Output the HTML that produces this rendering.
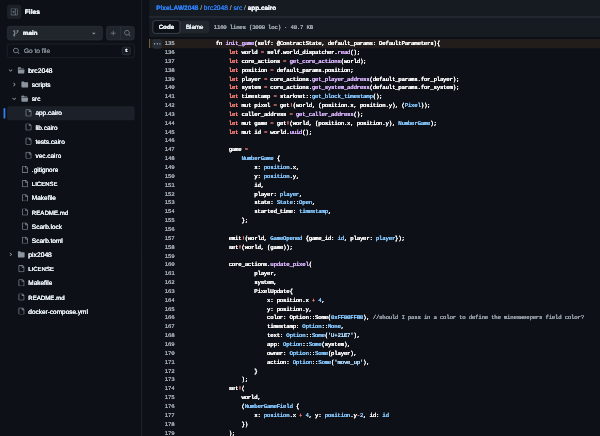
<!DOCTYPE html>
<html lang="en">
<head>
<meta charset="utf-8">
<title>brc2048/src/app.cairo at main · PixeLAW2048</title>
<style>
html,body{margin:0;padding:0;background:#0d1117;}
body{width:600px;height:436px;overflow:hidden;position:relative;will-change:transform;}
#root{position:absolute;left:0;top:0;width:1356px;height:986px;transform:scale(0.4425) rotate(0.0002deg);transform-origin:0 0;color:#e6edf3;font-family:"Liberation Sans",sans-serif;font-size:14px;line-height:20px;text-shadow:0 0 0 currentColor,0 0 0 currentColor;text-rendering:geometricPrecision;}
svg{display:block;fill:currentColor;}
#side{position:absolute;left:0;top:0;width:319px;height:986px;border-right:1px solid #30363d;background:#0d1117;}
.sh{position:absolute;left:16px;top:11px;height:32px;display:flex;align-items:center;}
.tb{width:32px;height:32px;border-radius:6px;background:#1c2128;color:#8b949e;display:flex;align-items:center;justify-content:center;}
.sh h2{margin:0 0 0 8px;font-size:15px;font-weight:700;color:#e6edf3;}
.br{position:absolute;left:16px;top:59px;width:288px;height:32px;display:flex;}
.bb{box-sizing:border-box;width:216px;height:32px;border:1px solid #363c44;border-radius:6px;background:#21262d;display:flex;align-items:center;padding:0 11px 0 11px;color:#8b949e;}
.bt{color:#e6edf3;font-weight:700;font-size:14px;margin-left:8px;flex:1;}
.grp{margin-left:8px;display:flex;}
.g1,.g2{box-sizing:border-box;width:32.5px;height:32px;border:1px solid #363c44;background:#21262d;color:#7d8590;display:flex;align-items:center;justify-content:center;}
.g1{border-radius:6px 0 0 6px;}
.g2{border-radius:0 6px 6px 0;margin-left:-1px;}
.sr{position:absolute;left:16px;top:99px;width:288px;height:32px;box-sizing:border-box;border:1px solid #30363d;border-radius:6px;background:#0d1117;display:flex;align-items:center;padding:0 8px 0 12px;color:#8b949e;}
.sp{margin-left:9px;flex:1;color:#7d8590;font-size:14.8px;}
kbd{font-family:"Liberation Mono",monospace;font-size:11px;line-height:10px;color:#e6edf3;border:1px solid #484f58;border-radius:4px;padding:3px 5px;background:#161b22;font-weight:700;}
.tree{position:absolute;left:16px;top:144px;width:288px;margin:0;padding:0;list-style:none;}
.ti{position:relative;height:32px;display:flex;align-items:center;border-radius:6px;box-sizing:border-box;color:#e6edf3;}
.ti .tg{width:16px;height:32px;display:flex;align-items:center;justify-content:center;color:#a3abb4;flex:none;position:relative;top:-1px;}
.ti .ic{width:16px;margin-left:8px;color:#8b949e;flex:none;position:relative;top:-1px;}
.ti .nm{margin-left:8px;font-size:14.6px;position:relative;top:1px;}
.ti.act{background:#1c2129;}
.ti.act .nm{font-weight:400;}
.ti.act::before{content:"";position:absolute;left:-8px;top:4px;width:4px;height:24px;border-radius:6px;background:#2f81f7;}
#main{position:absolute;left:337px;top:0;width:1030px;height:986px;}
.crumb{position:absolute;left:0;top:0;right:0;height:39px;background:#161b22;font-size:15.1px;line-height:24px;padding:6px 0 0 16px;box-sizing:border-box;}
.crumb a{color:#2b79e8;}
.crumb .b{font-weight:700;font-size:14.7px;}
.crumb .sep{color:#7d8590;margin:0 4px;}
.crumb .cur{font-weight:700;font-size:14.5px;color:#e6edf3;}
.hr{position:absolute;left:0;right:0;top:38px;height:1px;background:#484f58;z-index:3;}
.hr2{position:absolute;left:0;right:0;top:84px;height:1px;background:#06090d;z-index:3;}
.tool{position:absolute;left:0;top:39px;right:0;height:45px;background:#161b22;display:flex;align-items:center;}
.seg{margin-left:8px;margin-top:-1px;height:28px;border-radius:6px;background:#21262d;display:flex;font-size:14px;box-sizing:border-box;}
.seg .on{box-sizing:border-box;height:30px;margin-top:-1px;width:62px;border:1px solid #6e7681;border-radius:6px;background:#0d1117;font-weight:700;display:flex;align-items:center;justify-content:center;}
.seg .off{height:28px;width:66px;display:flex;align-items:center;justify-content:center;}
.meta{margin-left:10px;font-family:"Liberation Mono",monospace;font-size:13px;letter-spacing:-0.57px;color:#9da5ae;}
.meta,.code,kbd{text-shadow:0 0 0 currentColor,0 0 0 currentColor;}
.code{position:absolute;left:0;top:89px;right:0;font-family:"Liberation Mono",monospace;font-size:13px;letter-spacing:-0.57px;line-height:20px;}
.ln{position:relative;height:20px;white-space:pre;}
.ln .no{position:absolute;left:0;width:57px;text-align:right;color:#9da5ae;}
.ln .cd{position:absolute;left:93px;color:#ffffff;}
.ln.hl::before{content:"";position:absolute;left:0;right:0;top:-1px;height:21px;background:#221d1b;box-shadow:inset 2px 0 0 #806744;}
.kb{position:absolute;left:7px;top:-1px;width:22px;height:22px;border-radius:6px;background:#262c35;color:#f0f6fc;display:flex;align-items:center;justify-content:center;}
.kb svg{width:15px;height:15px;}
.k{color:#ff8278;}.f{color:#dab4ff;}.c{color:#86c8ff;}.s{color:#b0dcff;}.m{color:#99a2ac;}

</style>
</head>
<body>
<div id="root">
<aside id="side">
<div class="sh"><span class="tb"><svg width="16" height="16" viewBox="0 0 16 16"><path d="m4.177 7.823 2.396-2.396A.25.25 0 0 1 7 5.604v4.792a.25.25 0 0 1-.427.177L4.177 8.177a.25.25 0 0 1 0-.354Z"/><path d="M0 1.75C0 .784.784 0 1.75 0h12.5C15.216 0 16 .784 16 1.75v12.5A1.75 1.75 0 0 1 14.25 16H1.75A1.75 1.75 0 0 1 0 14.25Zm1.75-.25a.25.25 0 0 0-.25.25v12.5c0 .138.112.25.25.25H9.5v-13Zm12.5 13a.25.25 0 0 0 .25-.25V1.75a.25.25 0 0 0-.25-.25H11v13Z"/></svg></span><h2>Files</h2></div>
<div class="br"><span class="bb"><span class="bi"><svg width="16" height="16" viewBox="0 0 16 16"><path d="M9.5 3.25a2.25 2.25 0 1 1 3 2.122V6A2.5 2.5 0 0 1 10 8.5H6a1 1 0 0 0-1 1v1.128a2.251 2.251 0 1 1-1.5 0V5.372a2.25 2.25 0 1 1 1.5 0v1.836A2.493 2.493 0 0 1 6 7h4a1 1 0 0 0 1-1v-.628A2.25 2.25 0 0 1 9.5 3.25Zm-6 0a.75.75 0 1 0 1.5 0 .75.75 0 0 0-1.5 0Zm8.25-.75a.75.75 0 1 0 0 1.5.75.75 0 0 0 0-1.5ZM4.25 12a.75.75 0 1 0 0 1.5.75.75 0 0 0 0-1.5Z"/></svg></span><span class="bt">main</span><span class="bd"><svg width="16" height="16" viewBox="0 0 16 16"><path d="m4.427 7.427 3.396 3.396a.25.25 0 0 0 .354 0l3.396-3.396A.25.25 0 0 0 11.396 7H4.604a.25.25 0 0 0-.177.427Z"/></svg></span></span><span class="grp"><span class="g1"><svg width="16" height="16" viewBox="0 0 16 16"><path d="M7.75 2a.75.75 0 0 1 .75.75V7h4.25a.75.75 0 0 1 0 1.5H8.5v4.25a.75.75 0 0 1-1.5 0V8.5H2.75a.75.75 0 0 1 0-1.5H7V2.75A.75.75 0 0 1 7.75 2Z"/></svg></span><span class="g2"><svg width="16" height="16" viewBox="0 0 16 16"><path d="M10.68 11.74a6 6 0 0 1-7.922-8.982 6 6 0 0 1 8.982 7.922l3.04 3.04a.749.749 0 0 1-.326 1.275.749.749 0 0 1-.734-.215ZM11.5 7a4.499 4.499 0 1 0-8.997 0A4.499 4.499 0 0 0 11.5 7Z"/></svg></span></span></div>
<div class="sr"><span class="si"><svg width="16" height="16" viewBox="0 0 16 16"><path d="M10.68 11.74a6 6 0 0 1-7.922-8.982 6 6 0 0 1 8.982 7.922l3.04 3.04a.749.749 0 0 1-.326 1.275.749.749 0 0 1-.734-.215ZM11.5 7a4.499 4.499 0 1 0-8.997 0A4.499 4.499 0 0 0 11.5 7Z"/></svg></span><span class="sp">Go to file</span><kbd>t</kbd></div>
<ul class="tree">
<li class="ti" style="padding-left:0px"><span class="tg"><svg width="12" height="12" viewBox="0 0 12 12"><path d="M6 8.825c-.2 0-.4-.1-.5-.2l-3.3-3.3c-.3-.3-.3-.8 0-1.1.3-.3.8-.3 1.1 0l2.7 2.7 2.7-2.7c.3-.3.8-.3 1.1 0 .3.3.3.8 0 1.1l-3.2 3.2c-.2.2-.4.3-.6.3Z"/></svg></span><span class="ic"><svg width="16" height="16" viewBox="0 0 16 16"><path d="M.513 1.513A1.75 1.75 0 0 1 1.75 1h3.5c.55 0 1.07.26 1.4.7l.9 1.2a.25.25 0 0 0 .2.1H13a1 1 0 0 1 1 1v.5H2.75a.75.75 0 0 0 0 1.5h11.978a1 1 0 0 1 .994 1.117L15 13.25A1.75 1.75 0 0 1 13.25 15H1.75A1.75 1.75 0 0 1 0 13.25V2.75c0-.464.184-.91.513-1.237Z"/></svg></span><span class="nm" style="font-size:15.2px">brc2048</span></li>
<li class="ti" style="padding-left:8px"><span class="tg"><svg width="12" height="12" viewBox="0 0 12 12"><path d="M4.7 10c-.2 0-.4-.1-.5-.2-.3-.3-.3-.8 0-1.1L6.9 6 4.2 3.3c-.3-.3-.3-.8 0-1.1.3-.3.8-.3 1.1 0l3.3 3.2c.3.3.3.8 0 1.1L5.3 9.7c-.2.2-.4.3-.6.3Z"/></svg></span><span class="ic"><svg width="16" height="16" viewBox="0 0 16 16"><path d="M1.75 1A1.75 1.75 0 0 0 0 2.75v10.5C0 14.216.784 15 1.75 15h12.5A1.75 1.75 0 0 0 16 13.25v-8.5A1.75 1.75 0 0 0 14.25 3H7.5a.25.25 0 0 1-.2-.1l-.9-1.2C6.07 1.26 5.55 1 5 1H1.75Z"/></svg></span><span class="nm">scripts</span></li>
<li class="ti" style="padding-left:8px"><span class="tg"><svg width="12" height="12" viewBox="0 0 12 12"><path d="M6 8.825c-.2 0-.4-.1-.5-.2l-3.3-3.3c-.3-.3-.3-.8 0-1.1.3-.3.8-.3 1.1 0l2.7 2.7 2.7-2.7c.3-.3.8-.3 1.1 0 .3.3.3.8 0 1.1l-3.2 3.2c-.2.2-.4.3-.6.3Z"/></svg></span><span class="ic"><svg width="16" height="16" viewBox="0 0 16 16"><path d="M.513 1.513A1.75 1.75 0 0 1 1.75 1h3.5c.55 0 1.07.26 1.4.7l.9 1.2a.25.25 0 0 0 .2.1H13a1 1 0 0 1 1 1v.5H2.75a.75.75 0 0 0 0 1.5h11.978a1 1 0 0 1 .994 1.117L15 13.25A1.75 1.75 0 0 1 13.25 15H1.75A1.75 1.75 0 0 1 0 13.25V2.75c0-.464.184-.91.513-1.237Z"/></svg></span><span class="nm">src</span></li>
<li class="ti act" style="padding-left:16px"><span class="tg"></span><span class="ic"><svg width="16" height="16" viewBox="0 0 16 16"><path d="M2 1.75C2 .784 2.784 0 3.75 0h6.586c.464 0 .909.184 1.237.513l2.914 2.914c.329.328.513.773.513 1.237v9.586A1.75 1.75 0 0 1 13.25 16h-9.5A1.75 1.75 0 0 1 2 14.25Zm1.75-.25a.25.25 0 0 0-.25.25v12.5c0 .138.112.25.25.25h9.5a.25.25 0 0 0 .25-.25V6h-2.75A1.75 1.75 0 0 1 9 4.25V1.5Zm6.75.062V4.25c0 .138.112.25.25.25h2.688l-.011-.013-2.914-2.914-.013-.011Z"/></svg></span><span class="nm">app.cairo</span></li>
<li class="ti" style="padding-left:16px"><span class="tg"></span><span class="ic"><svg width="16" height="16" viewBox="0 0 16 16"><path d="M2 1.75C2 .784 2.784 0 3.75 0h6.586c.464 0 .909.184 1.237.513l2.914 2.914c.329.328.513.773.513 1.237v9.586A1.75 1.75 0 0 1 13.25 16h-9.5A1.75 1.75 0 0 1 2 14.25Zm1.75-.25a.25.25 0 0 0-.25.25v12.5c0 .138.112.25.25.25h9.5a.25.25 0 0 0 .25-.25V6h-2.75A1.75 1.75 0 0 1 9 4.25V1.5Zm6.75.062V4.25c0 .138.112.25.25.25h2.688l-.011-.013-2.914-2.914-.013-.011Z"/></svg></span><span class="nm">lib.cairo</span></li>
<li class="ti" style="padding-left:16px"><span class="tg"></span><span class="ic"><svg width="16" height="16" viewBox="0 0 16 16"><path d="M2 1.75C2 .784 2.784 0 3.75 0h6.586c.464 0 .909.184 1.237.513l2.914 2.914c.329.328.513.773.513 1.237v9.586A1.75 1.75 0 0 1 13.25 16h-9.5A1.75 1.75 0 0 1 2 14.25Zm1.75-.25a.25.25 0 0 0-.25.25v12.5c0 .138.112.25.25.25h9.5a.25.25 0 0 0 .25-.25V6h-2.75A1.75 1.75 0 0 1 9 4.25V1.5Zm6.75.062V4.25c0 .138.112.25.25.25h2.688l-.011-.013-2.914-2.914-.013-.011Z"/></svg></span><span class="nm">tests.cairo</span></li>
<li class="ti" style="padding-left:16px"><span class="tg"></span><span class="ic"><svg width="16" height="16" viewBox="0 0 16 16"><path d="M2 1.75C2 .784 2.784 0 3.75 0h6.586c.464 0 .909.184 1.237.513l2.914 2.914c.329.328.513.773.513 1.237v9.586A1.75 1.75 0 0 1 13.25 16h-9.5A1.75 1.75 0 0 1 2 14.25Zm1.75-.25a.25.25 0 0 0-.25.25v12.5c0 .138.112.25.25.25h9.5a.25.25 0 0 0 .25-.25V6h-2.75A1.75 1.75 0 0 1 9 4.25V1.5Zm6.75.062V4.25c0 .138.112.25.25.25h2.688l-.011-.013-2.914-2.914-.013-.011Z"/></svg></span><span class="nm">vec.cairo</span></li>
<li class="ti" style="padding-left:8px"><span class="tg"></span><span class="ic"><svg width="16" height="16" viewBox="0 0 16 16"><path d="M2 1.75C2 .784 2.784 0 3.75 0h6.586c.464 0 .909.184 1.237.513l2.914 2.914c.329.328.513.773.513 1.237v9.586A1.75 1.75 0 0 1 13.25 16h-9.5A1.75 1.75 0 0 1 2 14.25Zm1.75-.25a.25.25 0 0 0-.25.25v12.5c0 .138.112.25.25.25h9.5a.25.25 0 0 0 .25-.25V6h-2.75A1.75 1.75 0 0 1 9 4.25V1.5Zm6.75.062V4.25c0 .138.112.25.25.25h2.688l-.011-.013-2.914-2.914-.013-.011Z"/></svg></span><span class="nm">.gitignore</span></li>
<li class="ti" style="padding-left:8px"><span class="tg"></span><span class="ic"><svg width="16" height="16" viewBox="0 0 16 16"><path d="M2 1.75C2 .784 2.784 0 3.75 0h6.586c.464 0 .909.184 1.237.513l2.914 2.914c.329.328.513.773.513 1.237v9.586A1.75 1.75 0 0 1 13.25 16h-9.5A1.75 1.75 0 0 1 2 14.25Zm1.75-.25a.25.25 0 0 0-.25.25v12.5c0 .138.112.25.25.25h9.5a.25.25 0 0 0 .25-.25V6h-2.75A1.75 1.75 0 0 1 9 4.25V1.5Zm6.75.062V4.25c0 .138.112.25.25.25h2.688l-.011-.013-2.914-2.914-.013-.011Z"/></svg></span><span class="nm" style="font-size:13.5px">LICENSE</span></li>
<li class="ti" style="padding-left:8px"><span class="tg"></span><span class="ic"><svg width="16" height="16" viewBox="0 0 16 16"><path d="M2 1.75C2 .784 2.784 0 3.75 0h6.586c.464 0 .909.184 1.237.513l2.914 2.914c.329.328.513.773.513 1.237v9.586A1.75 1.75 0 0 1 13.25 16h-9.5A1.75 1.75 0 0 1 2 14.25Zm1.75-.25a.25.25 0 0 0-.25.25v12.5c0 .138.112.25.25.25h9.5a.25.25 0 0 0 .25-.25V6h-2.75A1.75 1.75 0 0 1 9 4.25V1.5Zm6.75.062V4.25c0 .138.112.25.25.25h2.688l-.011-.013-2.914-2.914-.013-.011Z"/></svg></span><span class="nm">Makefile</span></li>
<li class="ti" style="padding-left:8px"><span class="tg"></span><span class="ic"><svg width="16" height="16" viewBox="0 0 16 16"><path d="M2 1.75C2 .784 2.784 0 3.75 0h6.586c.464 0 .909.184 1.237.513l2.914 2.914c.329.328.513.773.513 1.237v9.586A1.75 1.75 0 0 1 13.25 16h-9.5A1.75 1.75 0 0 1 2 14.25Zm1.75-.25a.25.25 0 0 0-.25.25v12.5c0 .138.112.25.25.25h9.5a.25.25 0 0 0 .25-.25V6h-2.75A1.75 1.75 0 0 1 9 4.25V1.5Zm6.75.062V4.25c0 .138.112.25.25.25h2.688l-.011-.013-2.914-2.914-.013-.011Z"/></svg></span><span class="nm" style="font-size:13.8px">README.md</span></li>
<li class="ti" style="padding-left:8px"><span class="tg"></span><span class="ic"><svg width="16" height="16" viewBox="0 0 16 16"><path d="M2 1.75C2 .784 2.784 0 3.75 0h6.586c.464 0 .909.184 1.237.513l2.914 2.914c.329.328.513.773.513 1.237v9.586A1.75 1.75 0 0 1 13.25 16h-9.5A1.75 1.75 0 0 1 2 14.25Zm1.75-.25a.25.25 0 0 0-.25.25v12.5c0 .138.112.25.25.25h9.5a.25.25 0 0 0 .25-.25V6h-2.75A1.75 1.75 0 0 1 9 4.25V1.5Zm6.75.062V4.25c0 .138.112.25.25.25h2.688l-.011-.013-2.914-2.914-.013-.011Z"/></svg></span><span class="nm">Scarb.lock</span></li>
<li class="ti" style="padding-left:8px"><span class="tg"></span><span class="ic"><svg width="16" height="16" viewBox="0 0 16 16"><path d="M2 1.75C2 .784 2.784 0 3.75 0h6.586c.464 0 .909.184 1.237.513l2.914 2.914c.329.328.513.773.513 1.237v9.586A1.75 1.75 0 0 1 13.25 16h-9.5A1.75 1.75 0 0 1 2 14.25Zm1.75-.25a.25.25 0 0 0-.25.25v12.5c0 .138.112.25.25.25h9.5a.25.25 0 0 0 .25-.25V6h-2.75A1.75 1.75 0 0 1 9 4.25V1.5Zm6.75.062V4.25c0 .138.112.25.25.25h2.688l-.011-.013-2.914-2.914-.013-.011Z"/></svg></span><span class="nm">Scarb.toml</span></li>
<li class="ti" style="padding-left:0px"><span class="tg"><svg width="12" height="12" viewBox="0 0 12 12"><path d="M4.7 10c-.2 0-.4-.1-.5-.2-.3-.3-.3-.8 0-1.1L6.9 6 4.2 3.3c-.3-.3-.3-.8 0-1.1.3-.3.8-.3 1.1 0l3.3 3.2c.3.3.3.8 0 1.1L5.3 9.7c-.2.2-.4.3-.6.3Z"/></svg></span><span class="ic"><svg width="16" height="16" viewBox="0 0 16 16"><path d="M1.75 1A1.75 1.75 0 0 0 0 2.75v10.5C0 14.216.784 15 1.75 15h12.5A1.75 1.75 0 0 0 16 13.25v-8.5A1.75 1.75 0 0 0 14.25 3H7.5a.25.25 0 0 1-.2-.1l-.9-1.2C6.07 1.26 5.55 1 5 1H1.75Z"/></svg></span><span class="nm" style="font-size:15.2px">pix2048</span></li>
<li class="ti" style="padding-left:0px"><span class="tg"></span><span class="ic"><svg width="16" height="16" viewBox="0 0 16 16"><path d="M2 1.75C2 .784 2.784 0 3.75 0h6.586c.464 0 .909.184 1.237.513l2.914 2.914c.329.328.513.773.513 1.237v9.586A1.75 1.75 0 0 1 13.25 16h-9.5A1.75 1.75 0 0 1 2 14.25Zm1.75-.25a.25.25 0 0 0-.25.25v12.5c0 .138.112.25.25.25h9.5a.25.25 0 0 0 .25-.25V6h-2.75A1.75 1.75 0 0 1 9 4.25V1.5Zm6.75.062V4.25c0 .138.112.25.25.25h2.688l-.011-.013-2.914-2.914-.013-.011Z"/></svg></span><span class="nm" style="font-size:13.5px">LICENSE</span></li>
<li class="ti" style="padding-left:0px"><span class="tg"></span><span class="ic"><svg width="16" height="16" viewBox="0 0 16 16"><path d="M2 1.75C2 .784 2.784 0 3.75 0h6.586c.464 0 .909.184 1.237.513l2.914 2.914c.329.328.513.773.513 1.237v9.586A1.75 1.75 0 0 1 13.25 16h-9.5A1.75 1.75 0 0 1 2 14.25Zm1.75-.25a.25.25 0 0 0-.25.25v12.5c0 .138.112.25.25.25h9.5a.25.25 0 0 0 .25-.25V6h-2.75A1.75 1.75 0 0 1 9 4.25V1.5Zm6.75.062V4.25c0 .138.112.25.25.25h2.688l-.011-.013-2.914-2.914-.013-.011Z"/></svg></span><span class="nm">Makefile</span></li>
<li class="ti" style="padding-left:0px"><span class="tg"></span><span class="ic"><svg width="16" height="16" viewBox="0 0 16 16"><path d="M2 1.75C2 .784 2.784 0 3.75 0h6.586c.464 0 .909.184 1.237.513l2.914 2.914c.329.328.513.773.513 1.237v9.586A1.75 1.75 0 0 1 13.25 16h-9.5A1.75 1.75 0 0 1 2 14.25Zm1.75-.25a.25.25 0 0 0-.25.25v12.5c0 .138.112.25.25.25h9.5a.25.25 0 0 0 .25-.25V6h-2.75A1.75 1.75 0 0 1 9 4.25V1.5Zm6.75.062V4.25c0 .138.112.25.25.25h2.688l-.011-.013-2.914-2.914-.013-.011Z"/></svg></span><span class="nm" style="font-size:13.8px">README.md</span></li>
<li class="ti" style="padding-left:0px"><span class="tg"></span><span class="ic"><svg width="16" height="16" viewBox="0 0 16 16"><path d="M2 1.75C2 .784 2.784 0 3.75 0h6.586c.464 0 .909.184 1.237.513l2.914 2.914c.329.328.513.773.513 1.237v9.586A1.75 1.75 0 0 1 13.25 16h-9.5A1.75 1.75 0 0 1 2 14.25Zm1.75-.25a.25.25 0 0 0-.25.25v12.5c0 .138.112.25.25.25h9.5a.25.25 0 0 0 .25-.25V6h-2.75A1.75 1.75 0 0 1 9 4.25V1.5Zm6.75.062V4.25c0 .138.112.25.25.25h2.688l-.011-.013-2.914-2.914-.013-.011Z"/></svg></span><span class="nm">docker-compose.yml</span></li>
</ul>
</aside>
<main id="main">
<div class="crumb"><a class="b">PixeLAW2048</a><span class="sep">/</span><a>brc2048</a><span class="sep">/</span><a>src</a><span class="sep">/</span><span class="cur">app.cairo</span></div>
<div class="tool"><span class="seg"><span class="on">Code</span><span class="off">Blame</span></span><span class="meta">1160 lines (1009 loc) · 40.7 KB</span></div>
<div class="hr"></div><div class="hr2"></div>
<div class="code">
<div class="ln hl"><span class="kb"><svg width="16" height="16" viewBox="0 0 16 16"><path d="M8 9a1.5 1.5 0 1 0 0-3 1.5 1.5 0 0 0 0 3ZM1.5 9a1.5 1.5 0 1 0 0-3 1.5 1.5 0 0 0 0 3Zm13 0a1.5 1.5 0 1 0 0-3 1.5 1.5 0 0 0 0 3Z"/></svg></span><span class="no">135</span><span class="cd">        fn <span class="f">init_game</span>(self: @ContractState, default_params: DefaultParameters){</span></div>
<div class="ln"><span class="no">136</span><span class="cd">            <span class="k">let</span> world <span class="k">=</span> self.world_dispatcher.<span class="f">read</span>();</span></div>
<div class="ln"><span class="no">137</span><span class="cd">            <span class="k">let</span> core_actions <span class="k">=</span> <span class="f">get_core_actions</span>(world);</span></div>
<div class="ln"><span class="no">138</span><span class="cd">            <span class="k">let</span> position <span class="k">=</span> default_params.position;</span></div>
<div class="ln"><span class="no">139</span><span class="cd">            <span class="k">let</span> player <span class="k">=</span> core_actions.<span class="f">get_player_address</span>(default_params.for_player);</span></div>
<div class="ln"><span class="no">140</span><span class="cd">            <span class="k">let</span> system <span class="k">=</span> core_actions.<span class="f">get_system_address</span>(default_params.for_system);</span></div>
<div class="ln"><span class="no">141</span><span class="cd">            <span class="k">let</span> timestamp <span class="k">=</span> starknet::<span class="c">get_block_timestamp</span>();</span></div>
<div class="ln"><span class="no">142</span><span class="cd">            <span class="k">let</span> mut pixel <span class="k">=</span> get<span class="k">!</span>(world, (position.x, position.y), (<span class="c">Pixel</span>));</span></div>
<div class="ln"><span class="no">143</span><span class="cd">            <span class="k">let</span> caller_address <span class="k">=</span> <span class="f">get_caller_address</span>();</span></div>
<div class="ln"><span class="no">144</span><span class="cd">            <span class="k">let</span> mut game <span class="k">=</span> get<span class="k">!</span>(world, (position.x, position.y), <span class="c">NumberGame</span>);</span></div>
<div class="ln"><span class="no">145</span><span class="cd">            <span class="k">let</span> mut id <span class="k">=</span> world.<span class="f">uuid</span>();</span></div>
<div class="ln"><span class="no">146</span><span class="cd"></span></div>
<div class="ln"><span class="no">147</span><span class="cd">            game <span class="k">=</span></span></div>
<div class="ln"><span class="no">148</span><span class="cd">                <span class="c">NumberGame</span> {</span></div>
<div class="ln"><span class="no">149</span><span class="cd">                    x: <span class="c">position</span>.x,</span></div>
<div class="ln"><span class="no">150</span><span class="cd">                    y: <span class="c">position</span>.y,</span></div>
<div class="ln"><span class="no">151</span><span class="cd">                    id,</span></div>
<div class="ln"><span class="no">152</span><span class="cd">                    player: <span class="c">player</span>,</span></div>
<div class="ln"><span class="no">153</span><span class="cd">                    state: <span class="c">State</span>::<span class="c">Open</span>,</span></div>
<div class="ln"><span class="no">154</span><span class="cd">                    started_time: <span class="c">timestamp</span>,</span></div>
<div class="ln"><span class="no">155</span><span class="cd">                };</span></div>
<div class="ln"><span class="no">156</span><span class="cd"></span></div>
<div class="ln"><span class="no">157</span><span class="cd">            emit<span class="k">!</span>(world, <span class="c">GameOpened</span> {game_id: <span class="c">id</span>, player: <span class="c">player</span>});</span></div>
<div class="ln"><span class="no">158</span><span class="cd">            set<span class="k">!</span>(world, (game));</span></div>
<div class="ln"><span class="no">159</span><span class="cd"></span></div>
<div class="ln"><span class="no">160</span><span class="cd">            core_actions.<span class="f">update_pixel</span>(</span></div>
<div class="ln"><span class="no">161</span><span class="cd">                    player,</span></div>
<div class="ln"><span class="no">162</span><span class="cd">                    system,</span></div>
<div class="ln"><span class="no">163</span><span class="cd">                    PixelUpdate{</span></div>
<div class="ln"><span class="no">164</span><span class="cd">                        x: position.x <span class="k">+</span> <span class="c">4</span>,</span></div>
<div class="ln"><span class="no">165</span><span class="cd">                        y: position.y,</span></div>
<div class="ln"><span class="no">166</span><span class="cd">                        color: Option::Some(<span class="c">0xFF00FF80</span>), <span class="m">//should I pass in a color to define the minesweepers field color?</span></span></div>
<div class="ln"><span class="no">167</span><span class="cd">                        timestamp: <span class="c">Option</span>::<span class="c">None</span>,</span></div>
<div class="ln"><span class="no">168</span><span class="cd">                        text: <span class="c">Option</span>::<span class="c">Some</span>(<span class="s">&#x27;U+21E7&#x27;</span>),</span></div>
<div class="ln"><span class="no">169</span><span class="cd">                        app: <span class="c">Option</span>::<span class="c">Some</span>(system),</span></div>
<div class="ln"><span class="no">170</span><span class="cd">                        owner: <span class="c">Option</span>::<span class="c">Some</span>(player),</span></div>
<div class="ln"><span class="no">171</span><span class="cd">                        action: <span class="c">Option</span>::<span class="c">Some</span>(<span class="s">&#x27;move_up&#x27;</span>),</span></div>
<div class="ln"><span class="no">172</span><span class="cd">                    }</span></div>
<div class="ln"><span class="no">173</span><span class="cd">                );</span></div>
<div class="ln"><span class="no">174</span><span class="cd">            set<span class="k">!</span>(</span></div>
<div class="ln"><span class="no">175</span><span class="cd">                world,</span></div>
<div class="ln"><span class="no">176</span><span class="cd">                (<span class="c">NumberGameField</span> {</span></div>
<div class="ln"><span class="no">177</span><span class="cd">                    x: <span class="c">position</span>.x <span class="k">+</span> <span class="c">4</span>, y: <span class="c">position</span>.y<span class="k">-</span><span class="c">2</span>, id: <span class="c">id</span></span></div>
<div class="ln"><span class="no">178</span><span class="cd">                })</span></div>
<div class="ln"><span class="no">179</span><span class="cd">            );</span></div>
<div class="ln"><span class="no">180</span><span class="cd">            </span></div>
</div>
</main>
</div>
</body>
</html>
